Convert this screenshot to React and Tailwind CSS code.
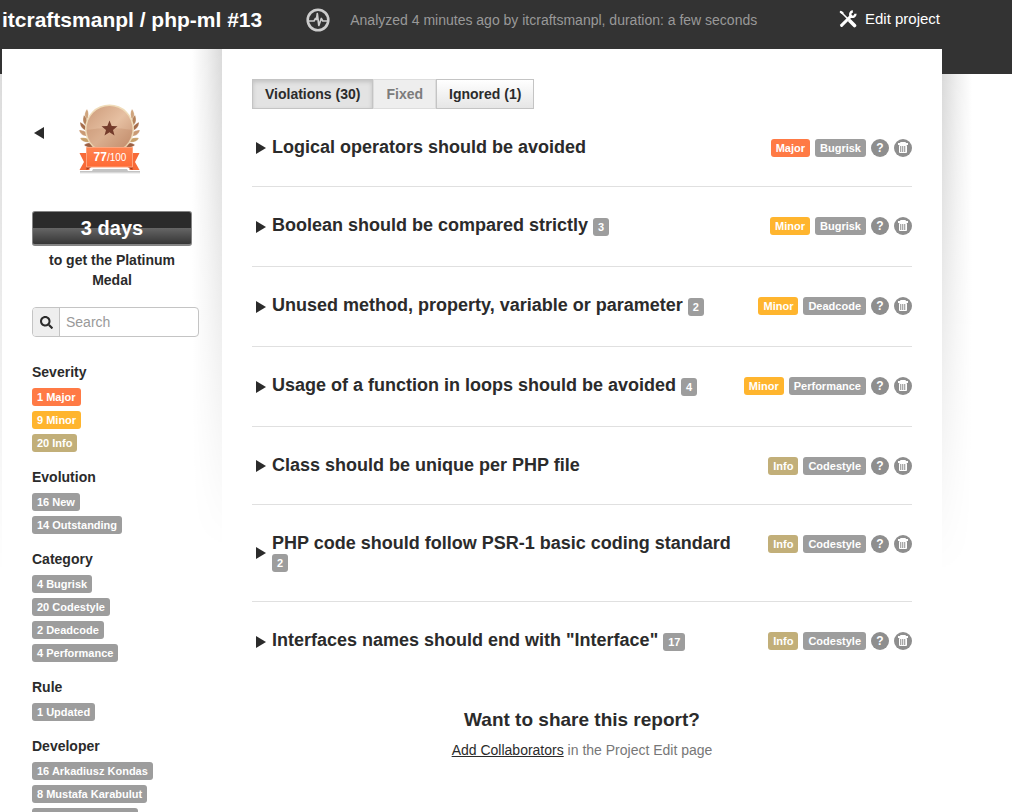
import React from "react";
import { FaSearch } from "react-icons/fa";

const tagColors = {
  major: "bg-[#ff7a45]",
  minor: "bg-[#ffb52e]",
  info: "bg-[#c2af79]",
  gray: "bg-[#9d9d9d]",
};

const filters = [
  {
    title: "Severity",
    tags: [
      { text: "1 Major", color: "major" },
      { text: "9 Minor", color: "minor" },
      { text: "20 Info", color: "info" },
    ],
  },
  { title: "Evolution", tags: [{ text: "16 New" }, { text: "14 Outstanding" }] },
  {
    title: "Category",
    tags: [{ text: "4 Bugrisk" }, { text: "20 Codestyle" }, { text: "2 Deadcode" }, { text: "4 Performance" }],
  },
  { title: "Rule", tags: [{ text: "1 Updated" }] },
  {
    title: "Developer",
    tags: [{ text: "16 Arkadiusz Kondas" }, { text: "8 Mustafa Karabulut" }, { text: "6 Povilas Susinski" }],
  },
];

const violations = [
  { title: "Logical operators should be avoided", severity: "Major", color: "major", category: "Bugrisk" },
  { title: "Boolean should be compared strictly", count: 3, severity: "Minor", color: "minor", category: "Bugrisk" },
  { title: "Unused method, property, variable or parameter", count: 2, severity: "Minor", color: "minor", category: "Deadcode" },
  { title: "Usage of a function in loops should be avoided", count: 4, severity: "Minor", color: "minor", category: "Performance" },
  { title: "Class should be unique per PHP file", severity: "Info", color: "info", category: "Codestyle" },
  { title: "PHP code should follow PSR-1 basic coding standard", count: 2, severity: "Info", color: "info", category: "Codestyle" },
  { title: 'Interfaces names should end with "Interface"', count: 17, severity: "Info", color: "info", category: "Codestyle" },
];

function Tag({ children, color = "gray" }) {
  return (
    <span className={`inline-block rounded-[3px] px-[5px] py-0.5 text-[11px] leading-[14px] font-bold whitespace-nowrap text-white ${tagColors[color]}`}>
      {children}
    </span>
  );
}

function PulseIcon() {
  return (
    <svg viewBox="0 0 24 24" className="size-6" fill="none" stroke="#ccc">
      <circle cx="12" cy="12" r="10.300" strokeWidth="2.600" />
      <path d="M3 13h5l1.500-2.500 1 1L11.300 5.500l1.500 12 2.500-7 1.500 2.500H21" strokeWidth="1.700" strokeLinejoin="round" />
    </svg>
  );
}

function ToolsIcon() {
  return (
    <svg viewBox="0 0 18 18" className="size-[18px]" fill="none" stroke="#fff" strokeLinecap="round">
      <path d="M1.800 2l1.700 1" strokeWidth="2.200" />
      <path d="M3 3l6.500 6.500" strokeWidth="1.600" />
      <path d="M11 11l4.500 4.500" strokeWidth="3.600" />
      <path d="M2.600 15.400L12 6" strokeWidth="3" />
      <path d="M16.500 3.800a3.200 3.200 0 0 1-4.500 2.800A3.200 3.200 0 0 1 13.800 1.300" strokeWidth="2.400" strokeLinecap="butt" />
    </svg>
  );
}

function TrashIcon() {
  return (
    <svg viewBox="0 0 18 18" className="size-[18px]">
      <circle cx="9" cy="9" r="9" fill="#8e8e8e" />
      <path d="M6.500 4.500v-1h5v1" fill="none" stroke="#fff" />
      <path d="M4 4h10v2H4z" fill="#fff" />
      <path d="M5.500 6.500h7v7h-7z" fill="#a8a8a8" stroke="#fff" />
      <path d="M7.500 7v6M9.500 7v6M11.500 7v6" stroke="#e4e4e4" />
    </svg>
  );
}

// one side of the laurel wreath, mirrored for the other
function Laurel() {
  return (
    <g stroke="#fff" strokeWidth=".3">
      <path d="M6 5c-3 4-3 8 0 11 2-4 2-8 0-11z" fill="#cfa47c" />
      <path d="M3 11c-2 5-1 9 3 11 1-4 0-8-3-11z" fill="#b5835c" />
      <path d="M-1 18c0 5 3 8 8 9-1-4-4-7-8-9z" fill="#a56d4b" />
      <path d="M-2 26c1 4 5 7 10 6-2-4-5-6-10-6z" fill="#c99973" />
      <path d="M-1 34c2 4 6 5 11 4-2-4-6-5-11-4z" fill="#c7a06b" />
      <path d="M3 41c3 3 8 3 12 1-3-4-8-4-12-1z" fill="#9b5f42" />
      <path d="M10 12c-3 4-4 7-2 11 3-4 3-8 2-11z" fill="#d0a479" />
      <path d="M8 22c-2 4-1 8 2 10 1-4 0-7-2-10z" fill="#b47f59" />
    </g>
  );
}

function Medal() {
  return (
    <div className="relative h-[74px] w-[66px]">
      <svg viewBox="0 0 66 74" className="h-[74px] w-[66px]">
        <defs>
          <linearGradient id="disc" x1="0" y1="0" x2="1" y2="1">
            <stop offset="0" stopColor="#cb9a78" />
            <stop offset=".3" stopColor="#dcb192" />
            <stop offset=".5" stopColor="#e6c0a2" />
            <stop offset="1" stopColor="#c59070" />
          </linearGradient>
          <linearGradient id="ribbon" x1="0" y1="0" x2="0" y2="1">
            <stop offset="0" stopColor="#ff8450" />
            <stop offset="1" stopColor="#ff6a35" />
          </linearGradient>
        </defs>
        <g transform="translate(4 1)">
          <Laurel />
        </g>
        <g transform="translate(61 1) scale(-1 1)">
          <Laurel />
        </g>
        <circle cx="32.500" cy="26" r="24.500" fill="#f0dcb9" />
        <circle cx="32.500" cy="26" r="23" fill="url(#disc)" />
        <path d="M9.500 27q23-4 46 0a23 23 0 0 1-46 0z" fill="#a9663f" opacity=".18" />
        <path d="M32.500 17.500l2.200 5.500 5.800.2-4.500 3.800 1.500 5.500-5-3.200-5 3.200 1.500-5.500-4.500-3.800 5.800-.2z" fill="#743b2b" />
        <path d="M3 68h12l1-2h34l1 2h12v1.500H3z" fill="#888" opacity=".5" />
        <path d="M3 69.500h60v1H3z" fill="#bbb" opacity=".4" />
        <path d="M2.500 50h10v17h-10l4.500-8zM62.500 50h-10v17h10l-4.500-8z" fill="#f76a38" />
        <path d="M9.500 64v3l5-3zM55.500 64v3l-5-3z" fill="#a83b1c" />
        <path d="M9.500 44.500h46V64h-46z" fill="url(#ribbon)" stroke="#ffa47d" />
      </svg>
      <span className="absolute inset-x-0 top-[45px] text-center text-[10px] leading-[18px] text-white">
        <b className="text-[12px]">77</b>/100
      </span>
    </div>
  );
}

function Shadow({ className }) {
  return (
    <div
      className={`pointer-events-none absolute w-[30px] h-[500px] mask-b-from-0% mask-b-to-100% ${className}`}
    />
  );
}

function Sidebar() {
  return (
    <aside className="relative w-[220px] shrink-0 px-[30px] pt-[54px]">
      <Shadow className="right-0 top-0 bg-linear-to-l from-[#dadada] via-[#efefef] to-white" />
      <div className="relative">
        <div className="flex items-start">
          <button aria-label="Previous analysis" className="mt-5 mr-[33px] ml-0.5 flex h-5 items-center">
            <svg viewBox="0 0 10 12" className="h-3 w-2.5" fill="#2b2b2b">
              <path d="M10 0v12L0 6z" />
            </svg>
          </button>
          <Medal />
        </div>
        <div className="mt-[34px] h-[35px] rounded-[3px] border border-b-2 border-[#858585] bg-linear-to-b from-[#2b2b2b] from-50% via-[#666] via-50% to-[#363636] text-center text-xl leading-8 font-bold text-white">
          3 days
        </div>
        <p className="mt-1 px-4 text-center font-bold">to get the Platinum Medal</p>
        <label className="mt-[17px] flex h-[30px] w-[167px] rounded-[4px] border border-[#c4c4c4] bg-white">
          <span className="flex w-[27px] items-center justify-center rounded-l-[3px] border-r border-[#c4c4c4] bg-[#eee]">
            <FaSearch className="size-[13px]" aria-label="Search" />
          </span>
          <input type="text" placeholder="Search" className="min-w-0 flex-1 px-1.5 outline-none placeholder:text-[#999]" />
        </label>
        <div className="mt-[25px] space-y-[15px]">
          {filters.map((group) => (
            <section key={group.title}>
              <h4 className="mb-1.5 font-bold">{group.title}</h4>
              <ul className="flex flex-col items-start gap-[5px]">
                {group.tags.map((t) => (
                  <li key={t.text} className="flex">
                    <Tag color={t.color}>{t.text}</Tag>
                  </li>
                ))}
              </ul>
            </section>
          ))}
        </div>
      </div>
    </aside>
  );
}

function Violation({ item }) {
  return (
    <li className="flex items-start border-b border-[#e0e0e0] py-[29px] last:border-b-0">
      <svg viewBox="0 0 10 12" className="mr-1.5 ml-1 h-3 w-2.5 shrink-0 self-center" fill="#2b2b2b">
        <path d="M0 0v12l10-6z" />
      </svg>
      <h3 className={`flex-1 pr-5 text-lg leading-[18px] font-bold ${item.count ? "min-h-[21px]" : ""}`}>
        {item.title} {item.count && <Tag>{item.count}</Tag>}
      </h3>
      <div className="flex shrink-0 gap-[5px] pt-px">
        <Tag color={item.color}>{item.severity}</Tag>
        <Tag>{item.category}</Tag>
        <button aria-label="Help" className="size-[18px] rounded-full bg-[#8e8e8e] text-xs leading-[18px] font-bold text-white">
          ?
        </button>
        <button aria-label="Ignore" className="size-[18px]">
          <TrashIcon />
        </button>
      </div>
    </li>
  );
}

export default function App() {
  return (
    <div className="min-h-screen overflow-hidden bg-white font-['Liberation_Sans',Arial,sans-serif] text-sm leading-5 text-[#2b2b2b]">
      <header className="h-[74px] bg-[#333]">
        <div className="ml-0.5 flex h-10 max-w-[940px] items-center text-[#999]">
          <h1 className="text-[21px] font-bold text-white">itcraftsmanpl / php-ml #13</h1>
          <span className="mr-5 ml-11">
            <PulseIcon />
          </span>
          <span>Analyzed 4 minutes ago by itcraftsmanpl, duration: a few seconds</span>
          <a href="#edit" className="mr-0.5 ml-auto flex items-center gap-2 pb-0.5 text-[15px] text-white">
            <ToolsIcon />
            Edit project
          </a>
        </div>
      </header>

      <div className="relative -mt-[25px] ml-0.5 flex max-w-[940px] bg-white">
        <Shadow className="left-full top-[25px] bg-linear-to-r from-[#dadada] via-[#efefef] to-white" />
        <Shadow className="right-full top-[25px] bg-linear-to-l from-[#dadada] via-[#efefef] to-white" />
        <Sidebar />
        <main className="min-w-0 flex-1 px-[30px] pt-[30px]">
          <div className="flex font-bold">
            <button className="h-[30px] border border-[#c4c4c4] bg-[#e3e3e3] px-3 inset-shadow-[0_2px_4px_rgba(0,0,0,0.15)]">
              Violations (30)
            </button>
            <button disabled className="h-[30px] border border-[#ddd] bg-[#eee] px-3 text-[#7c7c7c]">
              Fixed
            </button>
            <button className="h-[30px] border border-[#c4c4c4] bg-linear-to-b from-white to-[#e6e6e6] px-3">
              Ignored (1)
            </button>
          </div>
          <ul>
            {violations.map((item) => (
              <Violation key={item.title} item={item} />
            ))}
          </ul>
          <div className="mt-[29px] text-center text-[#777]">
            <h3 className="text-[19px] font-bold text-[#2b2b2b]">Want to share this report?</h3>
            <p className="mt-2.5">
              <a href="#collaborators" className="text-[#2b2b2b] underline">Add Collaborators</a> in the Project Edit page
            </p>
          </div>
        </main>
      </div>
    </div>
  );
}
